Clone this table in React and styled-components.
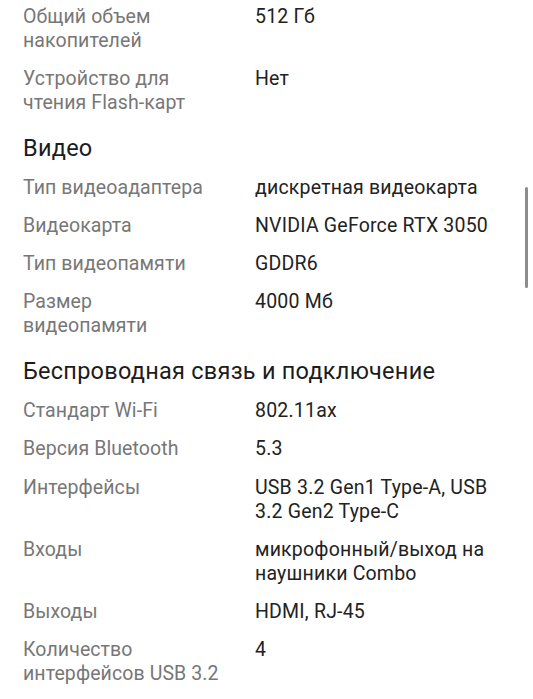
import React from "react";
import styled, { createGlobalStyle } from "styled-components";

const Global = createGlobalStyle`
  html, body { margin: 0; padding: 0; background: #ffffff; }
  body { font-family: Roboto, "Noto Sans", sans-serif; -webkit-font-smoothing: antialiased; }
`;

const Page = styled.div`
  position: relative;
  width: 533px;
  height: 699px;
  overflow: hidden;
  padding: 5px 30px 0 23px;
  box-sizing: border-box;
`;

const Section = styled.section`
  display: flex;
  flex-direction: column;
  gap: 14.2px;
  margin-bottom: 18.5px;
`;

const Heading = styled.h2`
  margin: 0;
  font-size: 23.5px;
  line-height: 28px;
  letter-spacing: 0.25px;
  font-weight: 400;
  color: #1c1c1c;
`;

const Row = styled.div`
  display: grid;
  grid-template-columns: 200px 1fr;
  column-gap: 32px;
  font-size: 19.5px;
  line-height: 24px;
  letter-spacing: 0.2px;
`;

const Label = styled.div`
  color: #777777;
  white-space: pre-line;
  letter-spacing: 0.1px;
`;

const Value = styled.div`
  color: #222222;
`;

const Scrollbar = styled.div`
  position: absolute;
  left: 525px;
  top: 187px;
  width: 3px;
  height: 101px;
  border-radius: 2px;
  background: #8c8c8c;
`;

const sections = [
  {
    rows: [
      ["Общий объем\nнакопителей", "512 Гб"],
      ["Устройство для\nчтения Flash-карт", "Нет"],
    ],
  },
  {
    title: "Видео",
    rows: [
      ["Тип видеоадаптера", "дискретная видеокарта"],
      ["Видеокарта", "NVIDIA GeForce RTX 3050"],
      ["Тип видеопамяти", "GDDR6"],
      ["Размер\nвидеопамяти", "4000 Мб"],
    ],
  },
  {
    title: "Беспроводная связь и подключение",
    rows: [
      ["Стандарт Wi-Fi", "802.11ax"],
      ["Версия Bluetooth", "5.3"],
      ["Интерфейсы", "USB 3.2 Gen1 Type-A, USB 3.2 Gen2 Type-C"],
      ["Входы", "микрофонный/выход на наушники Combo"],
      ["Выходы", "HDMI, RJ-45"],
      ["Количество\nинтерфейсов USB 3.2", "4"],
    ],
  },
];

export default function App() {
  return (
    <>
      <Global />
      <Page>
        {sections.map((s, i) => (
          <Section key={i}>
            {s.title && <Heading>{s.title}</Heading>}
            {s.rows.map(([l, v]) => (
              <Row key={l}>
                <Label>{l}</Label>
                <Value>{v}</Value>
              </Row>
            ))}
          </Section>
        ))}
        <Scrollbar />
      </Page>
    </>
  );
}
